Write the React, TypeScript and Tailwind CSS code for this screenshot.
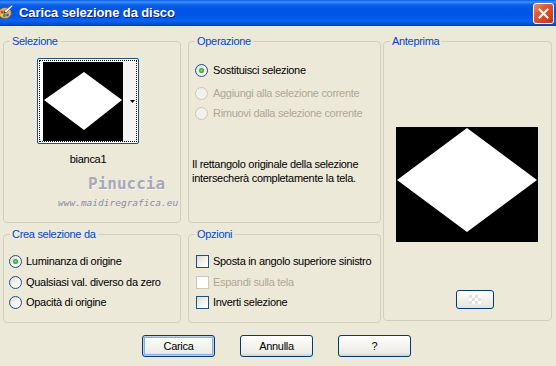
import React from "react";

function Radio({ checked = false, disabled = false }: { checked?: boolean; disabled?: boolean }) {
  return (
    <span
      className={
        "relative inline-flex h-[13px] w-[13px] shrink-0 items-center justify-center rounded-full border " +
        (disabled
          ? "border-[#CAC8BB] bg-[#F2F1EA]"
          : "border-[#1C5180] bg-[linear-gradient(135deg,#DCD9CE_0%,#F4F3EE_50%,#FFFFFF_100%)]")
      }
    >
      {checked && (
        <span className="h-[5px] w-[5px] rounded-full bg-[radial-gradient(circle,#7BE07B_0%,#21A121_70%,#1A861A_100%)]" />
      )}
    </span>
  );
}

function Check({ disabled = false }: { disabled?: boolean }) {
  return (
    <span
      className={
        "inline-block h-[13px] w-[13px] shrink-0 border " +
        (disabled
          ? "border-[#CAC8BB] bg-white"
          : "border-[#1C5180] bg-[linear-gradient(135deg,#DCDCD7_0%,#F5F5F2_60%,#FFFFFF_100%)]")
      }
    />
  );
}

function Group({
  label,
  className,
  children,
}: {
  label: string;
  className?: string;
  children?: React.ReactNode;
}) {
  return (
    <fieldset className={"m-0 rounded-[4px] border border-[#D0D0BF] p-0 " + (className ?? "")}>
      <legend className="ml-[6px] px-[2px] leading-[13px] text-[#0046D5]">{label}</legend>
      {children}
    </fieldset>
  );
}

function XPButton({ label, def = false }: { label: string; def?: boolean }) {
  return (
    <button
      className={
        "h-[22px] w-[73px] rounded-[3px] border border-[#003C74] bg-[linear-gradient(180deg,#FFFFFF_0%,#F6F5F1_40%,#ECEBE5_85%,#D6D0C5_100%)] text-[11px] leading-none text-black " +
        (def ? "shadow-[inset_0_0_0_1px_#BBD1F4,inset_0_0_0_2px_#89ADE4]" : "")
      }
    >
      {label}
    </button>
  );
}

function TitleIcon() {
  return (
    <svg width="16" height="16" viewBox="0 0 16 16" className="shrink-0">
      <ellipse cx="7" cy="9" rx="6.5" ry="5.5" fill="#D9B36A" stroke="#7A5526" strokeWidth="0.8" />
      <circle cx="4" cy="8" r="1.4" fill="#E23B2E" />
      <circle cx="6.5" cy="11.5" r="1.4" fill="#2E9B3A" />
      <circle cx="9.5" cy="11" r="1.3" fill="#2F5BD8" />
      <circle cx="3.8" cy="11" r="1.1" fill="#F1D24A" />
      <path d="M6 7 L14 1 L15 2 L8 9 Z" fill="#F4F4F4" stroke="#555" strokeWidth="0.6" />
      <path d="M6 7 L8 9 L5.5 9.8 Z" fill="#3A3A3A" />
    </svg>
  );
}

export default function App() {
  return (
    <div className="h-[366px] w-[556px] overflow-hidden bg-[#ECE9D8] font-['Liberation_Sans',Arial,sans-serif] text-[11px] tracking-[-0.3px] text-black">
      {/* Title bar */}
      <div className="flex h-[26px] items-center bg-[linear-gradient(180deg,#0A5FEC_0%,#3D8FF8_8%,#0F62EA_18%,#0056E6_30%,#0055E5_60%,#0A63F0_80%,#0052D6_92%,#0A3FAA_100%)]">
        <div className="ml-[-2px] mt-[-2px]">
          <TitleIcon />
        </div>
        <span className="ml-[5px] font-['Liberation_Sans',Arial,sans-serif] text-[13px] font-bold tracking-[-0.1px] text-white [text-shadow:1px_1px_0_#0A1E8C]">
          Carica selezione da disco
        </span>
        <div className="ml-auto mr-[2px] flex h-[21px] w-[21px] items-center justify-center rounded-[3px] border border-white bg-[linear-gradient(135deg,#F08A6C_0%,#E15A34_35%,#CF3E1C_80%,#B8300F_100%)]">
          <svg width="11" height="11" viewBox="0 0 11 11">
            <path d="M1.5 1.5 L9.5 9.5 M9.5 1.5 L1.5 9.5" stroke="white" strokeWidth="2" strokeLinecap="square" />
          </svg>
        </div>
      </div>

      {/* Groups */}
      <div className="flex pl-[3px] pt-[9px]">
        {/* Column 1 */}
        <div className="flex w-[178px] flex-col">
          <Group label="Selezione" className="h-[188px]">
            <div className="ml-[33px] mt-[10px] w-[102px]">
              <div className="relative h-[86px] w-[102px] rounded-[2px] border border-[#1C5180] bg-white">
                <div className="pointer-events-none absolute inset-[1px] border border-dotted border-black" />
                <div className="flex pl-[5px] pt-[3px]">
                  <div className="h-[79px] w-[80px] bg-black">
                    <svg width="80" height="79" viewBox="0 0 80 79">
                      <polygon points="1,38 41,10 79,38 41,68" fill="white" />
                    </svg>
                  </div>
                  <div className="flex h-[79px] w-[13px] items-center justify-end bg-[#F4F4F4] pr-[1px]">
                    <svg width="5" height="3" viewBox="0 0 5 3">
                      <polygon points="0,0 5,0 2.5,3" fill="black" />
                    </svg>
                  </div>
                </div>
              </div>
              <div className="mt-[9px] text-center leading-[13px]">bianca1</div>
            </div>
            <div className="ml-[84px] mt-[10px] font-['DejaVu_Sans_Mono',monospace] text-[16px] font-bold leading-[16px] tracking-normal text-[#A8A8BC] [text-shadow:1px_1px_0_#F4F3EE]">
              Pinuccia
            </div>
            <div className="ml-[54px] mt-[5px] font-['DejaVu_Sans_Mono',monospace] text-[9.5px] italic leading-[11px] tracking-normal text-[#8C8CA6]">
              www.maidiregrafica.eu
            </div>
          </Group>
          <Group label="Crea selezione da" className="mt-[5px] h-[95px]">
            <div className="ml-[5px] mt-[13px] flex flex-col whitespace-nowrap">
              <label className="flex h-[14px] items-center gap-[4px]">
                <Radio checked />
                <span>Luminanza di origine</span>
              </label>
              <label className="mt-[7px] flex h-[14px] items-center gap-[4px]">
                <Radio />
                <span>Qualsiasi val. diverso da zero</span>
              </label>
              <label className="mt-[6px] flex h-[14px] items-center gap-[4px]">
                <Radio />
                <span>Opacità di origine</span>
              </label>
            </div>
          </Group>
        </div>

        {/* Column 2 */}
        <div className="ml-[7px] flex w-[193px] flex-col">
          <Group label="Operazione" className="h-[188px]">
            <div className="ml-[6px] mt-[15px] flex flex-col whitespace-nowrap">
              <label className="flex h-[14px] items-center gap-[5px]">
                <Radio checked />
                <span>Sostituisci selezione</span>
              </label>
              <label className="mt-[9px] flex h-[14px] items-center gap-[5px] text-[#ACA899]">
                <Radio disabled />
                <span>Aggiungi alla selezione corrente</span>
              </label>
              <label className="mt-[6px] flex h-[14px] items-center gap-[5px] text-[#ACA899]">
                <Radio disabled />
                <span>Rimuovi dalla selezione corrente</span>
              </label>
            </div>
            <div className="ml-[3px] mt-[37px] whitespace-nowrap leading-[14px]">
              Il rettangolo originale della selezione
              <br />
              intersecherà completamente la tela.
            </div>
          </Group>
          <Group label="Opzioni" className="mt-[5px] h-[95px]">
            <div className="ml-[7px] mt-[13px] flex flex-col whitespace-nowrap">
              <label className="flex h-[14px] items-center gap-[4px]">
                <Check />
                <span>Sposta in angolo superiore sinistro</span>
              </label>
              <label className="mt-[7px] flex h-[14px] items-center gap-[4px] text-[#ACA899]">
                <Check disabled />
                <span>Espandi sulla tela</span>
              </label>
              <label className="mt-[6px] flex h-[14px] items-center gap-[4px]">
                <Check />
                <span>Inverti selezione</span>
              </label>
            </div>
          </Group>
        </div>

        {/* Column 3 */}
        <div className="ml-[2px] w-[169px]">
          <Group label="Anteprima" className="h-[286px]">
            <div className="ml-[12px] mt-[79px] h-[115px] w-[142px] bg-black">
              <svg width="142" height="115" viewBox="0 0 142 115">
                <polygon points="1,53 71,1 141,53 71,105" fill="white" />
              </svg>
            </div>
            <div className="ml-[72px] mt-[48px] flex h-[19px] w-[38px] items-center justify-center rounded-[3px] border border-[#003C74] bg-[linear-gradient(180deg,#FFFFFF_0%,#F3F2EE_50%,#E4E2DA_100%)]">
              <div className="grid grid-cols-4 grid-rows-3">
                {Array.from({ length: 12 }).map((_, i) => (
                  <span
                    key={i}
                    className={
                      "h-[3px] w-[3px] " +
                      ((Math.floor(i / 4) + (i % 4)) % 2 === 0 ? "bg-[#E2E2E2]" : "bg-white")
                    }
                  />
                ))}
              </div>
            </div>
          </Group>
        </div>
      </div>

      {/* Buttons */}
      <div className="mt-[12px] flex gap-[25px] pl-[142px]">
        <XPButton label="Carica" def />
        <XPButton label="Annulla" />
        <XPButton label="?" />
      </div>
    </div>
  );
}
